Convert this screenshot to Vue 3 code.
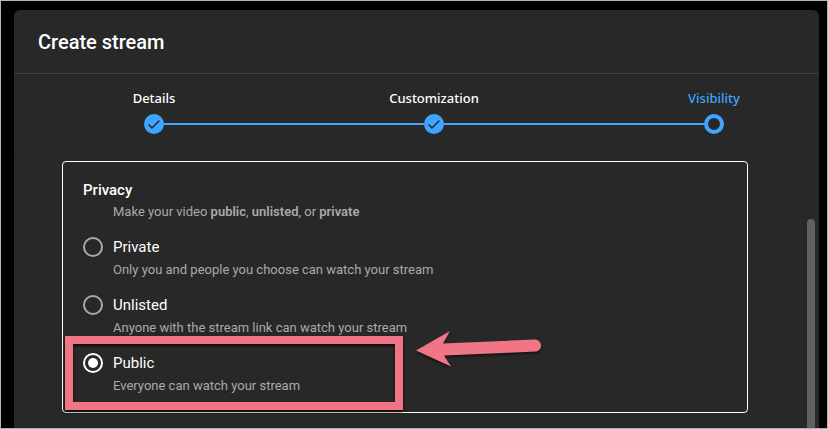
<!--
    Create stream dialog, Visibility step
    Stepper on top, privacy options below
-->

<template>
  <div class="page">
    <div class="dialog" role="dialog" aria-labelledby="dialog-title">
      <header class="dialog-header">
        <h1 id="dialog-title">Create stream</h1>
      </header>

      <!-- Stepper -->
      <nav class="stepper">
        <template v-for="(step, index) in steps" :key="step.name">
          <span v-if="index > 0" class="step-line"></span>
          <button type="button" class="step" :class="{ current: !step.done }">
            <span class="step-label">{{ step.name }}</span>
            <svg class="step-icon" viewBox="0 0 20 20" aria-hidden="true">
              <template v-if="step.done">
                <circle cx="10" cy="10" r="10" fill="#3ea6ff" />
                <path d="M4.6 10.6 L8 14 L15.4 6.4" fill="none" stroke="#1b2631" stroke-width="1.4" />
              </template>
              <circle v-else cx="10" cy="10" r="8" fill="none" stroke="#3ea6ff" stroke-width="4" />
            </svg>
          </button>
        </template>
      </nav>

      <div class="dialog-body">
        <fieldset class="privacy-card">
          <h2>Privacy</h2>
          <p class="hint">
            Make your video <b>public</b>, <b>unlisted</b>, or <b>private</b>
          </p>

          <div v-for="option in options" :key="option.value" class="option">
            <input
              :id="option.value"
              v-model="privacy"
              type="radio"
              name="privacy"
              :value="option.value"
            />
            <label :for="option.value">{{ option.label }}</label>
            <p class="option-text">{{ option.text }}</p>

            <!-- Highlight frame and arrow over the recommended option -->
            <template v-if="option.value === 'public'">
              <span class="highlight"></span>
              <svg class="arrow" viewBox="0 0 126 36" aria-hidden="true">
                <path
                  d="M0 19.5 L34 0 L27 12.5 L118.5 8.5 A6 6 0 0 1 119.5 20.5 L28 24.5 L35 35.5 Z"
                  fill="#f07586"
                />
              </svg>
            </template>
          </div>
        </fieldset>
        <span class="scroll-thumb"></span>
      </div>
    </div>
  </div>
</template>

<script setup>
import { ref } from 'vue'

const privacy = ref('public')

const steps = [
  { name: 'Details', done: true },
  { name: 'Customization', done: true },
  { name: 'Visibility', done: false },
]

const options = [
  { value: 'private', label: 'Private', text: 'Only you and people you choose can watch your stream' },
  { value: 'unlisted', label: 'Unlisted', text: 'Anyone with the stream link can watch your stream' },
  { value: 'public', label: 'Public', text: 'Everyone can watch your stream' },
]
</script>

<style>
body {
  margin: 0;
  background: #000;
}
</style>

<style scoped>
.page {
  display: flex;
  min-height: 100vh;
  padding: 9px 8px 0 13px;
  border: 1px solid #b4b4b4;
  box-sizing: border-box;
  background: #000;
  font-family: Roboto, "Liberation Sans", sans-serif;
  color: #fff;
}

.dialog {
  flex: 1;
  display: flex;
  flex-direction: column;
  min-width: 0;
  background: #282828;
  border-radius: 6px 6px 0 0;
}

.dialog-header {
  padding: 19px 24px 17px;
  border-bottom: 1px solid #3e3e3e;
}

h1 {
  margin: 0;
  font-size: 20px;
  line-height: 27px;
  font-weight: 500;
}

/* Stepper */
.stepper {
  display: flex;
  align-items: flex-end;
  padding: 14px 95px 20px 130px;
  border-bottom: 1px solid #252525;
}

.step {
  display: flex;
  flex-direction: column;
  align-items: center;
  gap: 6px;
  width: 20px;
  padding: 0;
  border: 0;
  background: none;
  color: #fff;
  cursor: pointer;
}

.step.current {
  color: #3ea6ff;
}

.step-label {
  font-family: "Noto Sans", "Open Sans", sans-serif;
  font-size: 13px;
  line-height: 20px;
  font-weight: 500;
  white-space: nowrap;
}

.step-icon {
  display: block;
  width: 20px;
  height: 20px;
}

.step-line {
  flex: 1;
  height: 2px;
  margin-bottom: 9px;
  background: #3ea6ff;
}

/* Privacy options */
.dialog-body {
  flex: 1;
  display: flex;
  justify-content: space-between;
  padding: 6px 4px 0 48px;
}

.privacy-card {
  flex: 1;
  align-self: flex-start;
  min-width: 0;
  margin: 0 59px 15px 0;
  padding: 18px 20px 14px;
  border: 1px solid #fff;
  border-radius: 4px;
}

h2 {
  margin: 0;
  font-size: 15px;
  line-height: 20px;
  font-weight: 500;
}

.hint,
.option-text {
  margin: 0;
  color: #aaa;
  font-size: 13px;
  line-height: 24px;
}

.hint {
  padding-left: 30px;
}

.hint b {
  font-weight: 600;
}

.option {
  position: relative;
  display: grid;
  grid-template-columns: 20px 1fr;
  column-gap: 10px;
  align-items: center;
  padding-top: 12px;
}

.option label {
  font-size: 15px;
  line-height: 22px;
}

.option-text {
  grid-column: 2;
}

.option input {
  display: grid;
  place-items: center;
  appearance: none;
  box-sizing: border-box;
  width: 20px;
  height: 20px;
  margin: 0;
  border: 2px solid #aaa;
  border-radius: 50%;
}

.option input:checked {
  border-color: #fff;
}

.option input:checked::before {
  content: "";
  width: 10px;
  height: 10px;
  border-radius: 50%;
  background: #fff;
}

.highlight {
  position: absolute;
  top: -4px;
  left: -18px;
  width: 338px;
  height: 74px;
  border: 8px solid #f07586;
  box-sizing: border-box;
  box-shadow: 0 2px 3px rgba(0, 0, 0, 0.7), inset 0 2px 3px rgba(0, 0, 0, 0.7);
  pointer-events: none;
}

.arrow {
  position: absolute;
  top: -9px;
  left: 333px;
  width: 126px;
  height: 36px;
  overflow: visible;
  filter: drop-shadow(0 2px 1px rgba(0, 0, 0, 0.5));
}

.scroll-thumb {
  width: 8px;
  margin-top: 58px;
  border-radius: 4px 4px 0 0;
  background: #606060;
}
</style>
